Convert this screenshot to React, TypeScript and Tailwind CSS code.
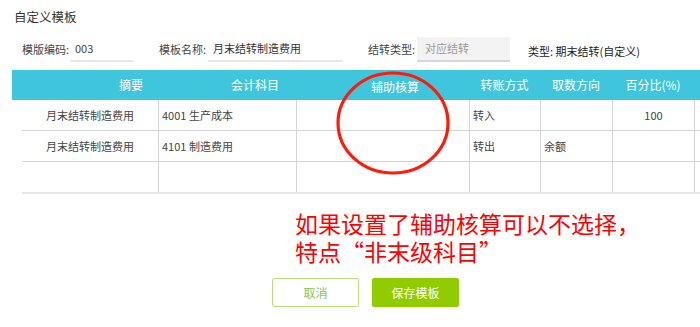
import React from "react";

const ROWS = [
  { summary: "月末结转制造费用", account: "4001 生产成本", aux: "", mode: "转入", dir: "", pct: "100" },
  { summary: "月末结转制造费用", account: "4101 制造费用", aux: "", mode: "转出", dir: "余额", pct: "" },
  { summary: "", account: "", aux: "", mode: "", dir: "", pct: "" },
];

export default function App() {
  return (
    <div className="relative w-[700px] h-[327px] overflow-hidden bg-white font-['Noto_Sans_CJK_SC','Noto_Sans',sans-serif] text-[#333]">
      {/* 标题 */}
      <div className="pt-[9px] pl-[14px] text-[12.5px] leading-[16px] text-[#333]">自定义模板</div>

      {/* 表单行 */}
      <div className="mt-[12px] flex items-stretch h-[25px] text-[11px]">
        <span className="ml-[22px] w-[48px] flex items-center text-[#444]">模版编码:</span>
        <div className="w-[63px] flex items-center pl-[5px] border-b-2 border-[#e8e8e8] text-[#444]">003</div>
        <span className="ml-[26px] w-[49px] flex items-center text-[#444]">模板名称:</span>
        <div className="w-[135px] flex items-center pl-[5px] border-b-2 border-[#e8e8e8] text-[#333]">月末结转制造费用</div>
        <span className="ml-[25px] w-[49px] flex items-center text-[#444]">结转类型:</span>
        <div className="w-[93px] flex items-center pl-[8px] bg-[#f3f3f3] border-b-2 border-[#d6d6d6] text-[#999]">对应结转</div>
        <span className="ml-[18px] flex items-center pt-[3px] text-[#222]">类型: 期末结转(自定义)</span>
      </div>

      {/* 表格 */}
      <div className="mt-[8px]">
        <div className="ml-[12px] h-[30px] bg-[#3fc6dc] grid grid-cols-[146px_138px_173px_71px_72px_82px_1fr] text-white text-[12px]">
          <div className="flex items-center pl-[107px]">摘要</div>
          <div className="flex items-center pl-[73px]">会计科目</div>
          <div className="flex items-center pl-[75px] pt-[3px]">辅助核算</div>
          <div className="flex items-center justify-center">转账方式</div>
          <div className="flex items-center justify-center">取数方向</div>
          <div className="flex items-center justify-center">百分比(%)</div>
          <div />
        </div>
        <div className="ml-[22px] text-[11px] text-[#444]">
          {ROWS.map((r, i) => (
            <div
              key={i}
              className={`grid grid-cols-[136px_138px_173px_71px_72px_82px_1fr] ${
                i < 2 ? "h-[31px] border-b border-[#d4d4d4]" : "h-[32px] border-b-2 border-[#e6e6e6]"
              }`}
            >
              <div className="flex items-center justify-center">{r.summary}</div>
              <div className="flex items-center pl-[3px] border-l border-[#d4d4d4]">{r.account}</div>
              <div className="flex items-center border-l border-[#d4d4d4]">{r.aux}</div>
              <div className="flex items-center pl-[3px] border-l border-[#d4d4d4]">{r.mode}</div>
              <div className="flex items-center pl-[3px] border-l border-[#d4d4d4]">{r.dir}</div>
              <div className="flex items-center justify-center border-l border-[#d4d4d4]">{r.pct}</div>
              <div className="border-l border-[#d4d4d4]" />
            </div>
          ))}
        </div>
      </div>

      {/* 注释 */}
      <div className="mt-[15px] ml-[295px] text-[23px] leading-[28px] text-[#ff0000]">
        <div className="h-[28px]">如果设置了辅助核算可以不选择，</div>
        <div className="h-[28px]">特点“非末级科目”</div>
      </div>

      {/* 按钮 */}
      <div className="mt-[13px] ml-[272px] flex gap-[13px] text-[12px]">
        <button className="w-[87px] h-[29px] rounded-[2px] border-[1.5px] border-[#b9df78] bg-white text-[#8cc63f]">取消</button>
        <button className="w-[87px] h-[29px] rounded-[2px] bg-[#90cc00] text-white">保存模板</button>
      </div>

      {/* 红色圈注 */}
      <svg className="absolute left-[335px] top-[71px]" width={116} height={104} viewBox="0 0 116 104">
        <ellipse cx={58} cy={52} rx={55} ry={50} fill="none" stroke="#ff1a0a" strokeWidth={3.2} />
      </svg>
    </div>
  );
}
